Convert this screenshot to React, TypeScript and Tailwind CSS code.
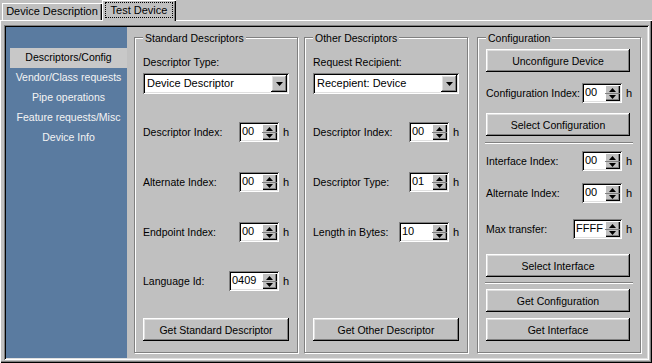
import React from "react";

const sunken =
  "shadow-[inset_1px_1px_0_#808080,inset_-1px_-1px_0_#ffffff,inset_2px_2px_0_#000000,inset_-2px_-2px_0_#dfdfdf]";
const raised =
  "shadow-[inset_-1px_-1px_0_#000000,inset_1px_1px_0_#ffffff,inset_-2px_-2px_0_#808080,inset_2px_2px_0_#dfdfdf]";

function Btn({ label, className }: { label: string; className: string }) {
  return (
    <div className={`h-[23px] flex items-center justify-center bg-[#c0c0c0] ${raised} ${className}`}>
      <span className="leading-[14px]">{label}</span>
    </div>
  );
}

function Select({ value }: { value: string }) {
  return (
    <div className={`h-[21px] w-full p-[2px] bg-white flex ${sunken}`}>
      <div className="flex-1 pl-[2px] leading-[17px] text-[11px]">{value}</div>
      <div className={`w-[16px] h-[17px] bg-[#c0c0c0] flex items-center justify-center ${raised}`}>
        <svg width="7" height="4" viewBox="0 0 7 4">
          <polygon points="0,0 7,0 3.5,4" fill="#000" />
        </svg>
      </div>
    </div>
  );
}

function Spin({ value, w }: { value: string; w: string }) {
  return (
    <div className={`h-[20px] p-[2px] bg-white flex ${sunken} ${w}`}>
      <div className="flex-1 pl-[1px] leading-[14px] text-[11px] text-black">{value}</div>
      <div className="w-[15px] h-[16px] flex flex-col bg-[#c0c0c0] shadow-[inset_1px_1px_0_#ffffff,inset_-1px_-1px_0_#000000,inset_-2px_-2px_0_#808080]">
        <div className="h-[8px] flex items-end justify-center pb-[1px]">
          <svg width="7" height="4" viewBox="0 0 7 4">
            <polygon points="0,4 7,4 3.5,0" fill="#000" />
          </svg>
        </div>
        <div className="h-[8px] flex items-start justify-center pt-[1px] border-t border-t-[#808080]">
          <svg width="7" height="4" viewBox="0 0 7 4">
            <polygon points="0,0 7,0 3.5,4" fill="#000" />
          </svg>
        </div>
      </div>
    </div>
  );
}

function Row({ label, value, w, className }: { label: string; value: string; w: string; className: string }) {
  return (
    <div className={`h-[20px] flex items-center ${className}`}>
      <div className="flex-1 leading-[14px]">{label}</div>
      <Spin value={value} w={w} />
      <div className="w-[10px] pl-[4px] leading-[14px] text-[11px]">h</div>
    </div>
  );
}

function Group({ title, className, children }: { title: string; className: string; children: React.ReactNode }) {
  return (
    <div
      className={`mt-[10px] w-[164px] h-[316px] border border-[#808080] shadow-[inset_1px_1px_0_#ffffff,1px_1px_0_#ffffff] px-[8px] flex flex-col ${className}`}
    >
      <div className="-mt-[7px] h-[14px] flex">
        <span className="inline-block h-[14px] leading-[14px] px-[2px] bg-[#c0c0c0]">{title}</span>
      </div>
      {children}
    </div>
  );
}

function Sep({ className }: { className: string }) {
  return <div className={`-mx-[1px] h-[2px] border-t border-t-[#808080] border-b border-b-white ${className}`} />;
}

export default function App() {
  const items = [
    "Descriptors/Config",
    "Vendor/Class requests",
    "Pipe operations",
    "Feature requests/Misc",
    "Device Info",
  ];
  return (
    <div className="w-[652px] h-[363px] bg-[#c0c0c0] flex flex-col text-[10.5px] text-black overflow-hidden font-['Liberation_Sans',Arial,sans-serif]">
      {/* Tabs */}
      <div className="h-[20px] flex items-end pl-[2px] relative z-10">
        <div className="h-[17px] w-[100px] flex items-center justify-center text-[11px] shadow-[inset_1px_1px_0_#ffffff,inset_-1px_0_0_#000000,inset_-2px_0_0_#808080]">
          Device Description
        </div>
        <div className="h-[21px] -mb-[1px] w-[74px] bg-[#c0c0c0] pt-[2px] px-[3px] shadow-[inset_1px_1px_0_#ffffff,inset_-1px_0_0_#000000,inset_-2px_0_0_#808080]">
          <div className="h-[16px] border border-dotted border-black flex items-center justify-center text-[11px]">
            Test Device
          </div>
        </div>
      </div>
      {/* Panel */}
      <div className="flex-1 flex pt-[5px] pl-[4px] pr-[3px] pb-[3px] shadow-[inset_1px_1px_0_#ffffff,inset_-1px_-1px_0_#000000,inset_-2px_-2px_0_#808080]">
        <div className={`flex-1 flex p-[2px] ${sunken}`}>
          {/* Sidebar */}
          <div className="w-[121px] bg-[#5a7ba0] pt-[21px] pl-[4px] flex flex-col">
            {items.map((it, i) => (
              <div
                key={it}
                className={
                  i === 0
                    ? "h-[20px] flex items-center justify-center bg-[#c8c8c8] text-black"
                    : "h-[20px] flex items-center justify-center text-[#f4f4f4]"
                }
              >
                {it}
              </div>
            ))}
          </div>
          {/* Right area */}
          <div className="flex-1 flex pl-[7px]">
            <Group title="Standard Descriptors" className="">
              <div className="mt-[10px] h-[14px] leading-[14px]">Descriptor Type:</div>
              <div className="mt-[4px]">
                <Select value="Device Descriptor" />
              </div>
              <Row className="mt-[28px]" label="Descriptor Index:" value="00" w="w-[40px]" />
              <Row className="mt-[30px]" label="Alternate Index:" value="00" w="w-[40px]" />
              <Row className="mt-[30px]" label="Endpoint Index:" value="00" w="w-[40px]" />
              <Row className="mt-[29px]" label="Language Id:" value="0409" w="w-[50px]" />
              <Btn className="mt-[27px] w-full" label="Get Standard Descriptor" />
            </Group>
            <Group title="Other Descriptors" className="ml-[6px]">
              <div className="mt-[10px] h-[14px] leading-[14px]">Request Recipient:</div>
              <div className="mt-[4px]">
                <Select value="Recepient: Device" />
              </div>
              <Row className="mt-[28px]" label="Descriptor Index:" value="00" w="w-[40px]" />
              <Row className="mt-[30px]" label="Descriptor Type:" value="01" w="w-[40px]" />
              <Row className="mt-[30px]" label="Length in Bytes:" value="10" w="w-[50px]" />
              <Btn className="mt-[76px] w-full" label="Get Other Descriptor" />
            </Group>
            <Group title="Configuration" className="ml-[9px]">
              <Btn className="mt-[4px] w-[144px]" label="Unconfigure Device" />
              <Row className="mt-[11px]" label="Configuration Index:" value="00" w="w-[40px]" />
              <Btn className="mt-[10px] w-[144px]" label="Select Configuration" />
              <Sep className="mt-[6px]" />
              <Row className="mt-[7px]" label="Interface Index:" value="00" w="w-[40px]" />
              <Row className="mt-[12px]" label="Alternate Index:" value="00" w="w-[40px]" />
              <Row className="mt-[16px]" label="Max transfer:" value="FFFF" w="w-[49px]" />
              <Btn className="mt-[15px] w-[144px]" label="Select Interface" />
              <Sep className="mt-[5px]" />
              <Btn className="mt-[5px] w-[144px]" label="Get Configuration" />
              <Btn className="mt-[6px] w-[144px]" label="Get Interface" />
            </Group>
          </div>
        </div>
      </div>
    </div>
  );
}
